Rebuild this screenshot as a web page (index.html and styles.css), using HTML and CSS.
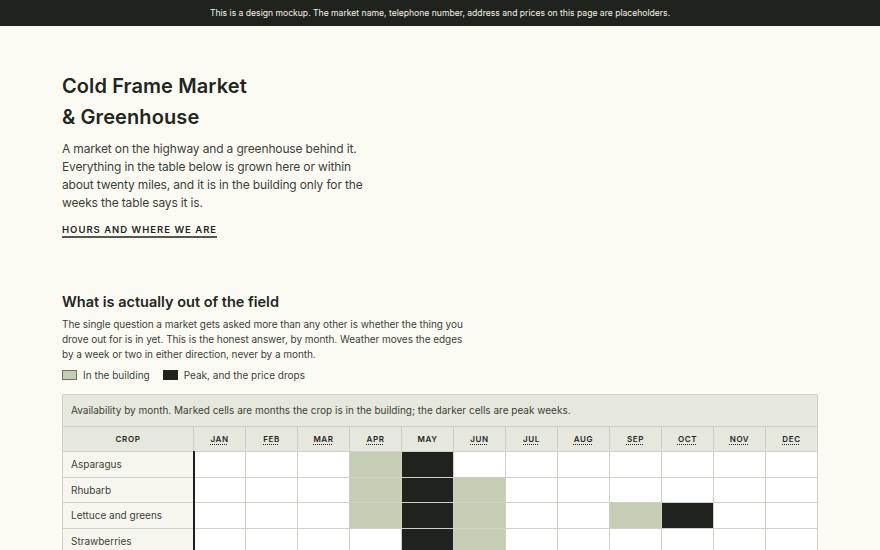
FILE: index.html
```html
<!DOCTYPE html>
<html lang="en">
<head>
  <meta charset="utf-8">
  <title>Cold Frame Market &amp; Greenhouse</title>
  <link rel="stylesheet" href="styles.css">
</head>
<body>
<div class="mockup-note">
  This is a design mockup. The market name, telephone number, address and prices on this page are placeholders.
</div>

<main class="page">
  <header class="intro">
    <h1>Cold Frame Market<br>&amp; Greenhouse</h1>
    <p>
      A market on the highway and a greenhouse behind it.
      Everything in the table below is grown here or within
      about twenty miles, and it is in the building only for the
      weeks the table says it is.
    </p>
    <a class="more" href="#hours">Hours and where we are</a>
  </header>

  <section class="season">
    <h2>What is actually out of the field</h2>
    <p>
      The single question a market gets asked more than any other is whether the thing you
      drove out for is in yet. This is the honest answer, by month. Weather moves the edges
      by a week or two in either direction, never by a month.
    </p>
    <ul class="legend">
      <li><span class="swatch in"></span>In the building</li>
      <li><span class="swatch peak"></span>Peak, and the price drops</li>
    </ul>

    <table class="calendar">
      <caption>Availability by month. Marked cells are months the crop is in the building; the darker cells are peak weeks.</caption>
      <thead>
        <tr>
          <th class="crop">Crop</th>
          <th><abbr title="January">Jan</abbr></th>
          <th><abbr title="February">Feb</abbr></th>
          <th><abbr title="March">Mar</abbr></th>
          <th><abbr title="April">Apr</abbr></th>
          <th>May</th>
          <th><abbr title="June">Jun</abbr></th>
          <th><abbr title="July">Jul</abbr></th>
          <th><abbr title="August">Aug</abbr></th>
          <th><abbr title="September">Sep</abbr></th>
          <th><abbr title="October">Oct</abbr></th>
          <th><abbr title="November">Nov</abbr></th>
          <th><abbr title="December">Dec</abbr></th>
        </tr>
      </thead>
      <tbody>
        <tr>
          <th class="crop">Asparagus</th>
          <td></td><td></td><td></td><td class="in"></td><td class="peak"></td><td></td>
          <td></td><td></td><td></td><td></td><td></td><td></td>
        </tr>
        <tr>
          <th class="crop">Rhubarb</th>
          <td></td><td></td><td></td><td class="in"></td><td class="peak"></td><td class="in"></td>
          <td></td><td></td><td></td><td></td><td></td><td></td>
        </tr>
        <tr>
          <th class="crop">Lettuce and greens</th>
          <td></td><td></td><td></td><td class="in"></td><td class="peak"></td><td class="in"></td>
          <td></td><td></td><td class="in"></td><td class="peak"></td><td></td><td></td>
        </tr>
        <tr>
          <th class="crop">Strawberries</th>
          <td></td><td></td><td></td><td></td><td class="peak"></td><td class="in"></td>
          <td></td><td></td><td></td><td></td><td></td><td></td>
        </tr>
      </tbody>
    </table>
  </section>
</main>
</body>
</html>
```

FILE: styles.css
```css
html, body {
    margin: 0;
    padding: 0;
}

body {
    background: #fbfbf4;
    color: #23261f;
    font-family: Inter, "Open Sans", sans-serif;
}

.mockup-note {
    background: #1f221d;
    color: #f4f4ea;
    font-size: 8.6px;
    line-height: 26px;
    text-align: center;
}

.page {
    max-width: 756px;
    margin: 0 auto;
    padding: 45px 0 60px;
}

/* intro block */

h1 {
    margin: 0;
    font-size: 20px;
    font-weight: 600;
    line-height: 31px;
    letter-spacing: .1px;
}

.intro p {
    margin: 7px 0 0;
    max-width: 306px;
    font-size: 12px;
    line-height: 18px;
    letter-spacing: -.15px;
    color: #3c3f38;
}

.more {
    display: inline-block;
    margin-top: 12px;
    color: #23261f;
    font-size: 9.5px;
    font-weight: 600;
    letter-spacing: 1px;
    text-transform: uppercase;
    text-decoration: none;
    padding-bottom: 1px;
    border-bottom: 2px solid #55584f;
}

/* season table */

.season {
    margin-top: 54px;
}

h2 {
    margin: 0;
    font-size: 14.5px;
    font-weight: 600;
    line-height: 20px;
}

.season p {
    margin: 5px 0 0;
    max-width: 412px;
    font-size: 10px;
    line-height: 15px;
    letter-spacing: -.05px;
    color: #3c3f38;
}

.legend {
    list-style: none;
    margin: 5px 0 0;
    padding: 0;
    display: flex;
    gap: 13px;
    font-size: 10px;
    line-height: 16px;
    color: #3c3f38;
}

.legend li {
    display: flex;
    align-items: center;
    gap: 6px;
}

.swatch {
    width: 13px;
    height: 8px;
    border: 1px solid #6e7266;
}

.swatch.in {
    background: #c5cdb4;
}

.swatch.peak {
    background: #1f221d;
    border-color: #1f221d;
}

.calendar {
    margin-top: 11px;
    width: 100%;
    border-collapse: collapse;
    table-layout: fixed;
}

.calendar caption {
    caption-side: top;
    text-align: left;
    background: #e7e8dd;
    border: 1px solid #cfd1c6;
    border-bottom: none;
    padding: 8px 8px 9px;
    font-size: 10px;
    line-height: 14px;
    color: #3c3f38;
}

.calendar th,
.calendar td {
    border: 1px solid #cfd1c6;
    padding: 0;
}

.calendar thead th {
    background: #e7e8dd;
    height: 24px;
    font-size: 8px;
    font-weight: 600;
    letter-spacing: .6px;
    text-transform: uppercase;
    text-align: center;
}

.calendar thead th.crop {
    width: 130px;
}

.calendar abbr {
    text-decoration: underline dotted;
    text-underline-offset: 2px;
}

.calendar tbody th {
    background: #f6f6ef;
    height: 24.5px;
    padding-left: 8px;
    text-align: left;
    font-size: 10px;
    font-weight: 400;
    color: #3c3f38;
    border-right: 2px solid #1f221d;
}

.calendar td {
    background: #fff;
}

.calendar td.in {
    background: #c5cdb4;
}

.calendar td.peak {
    background: #1f221d;
}
```
